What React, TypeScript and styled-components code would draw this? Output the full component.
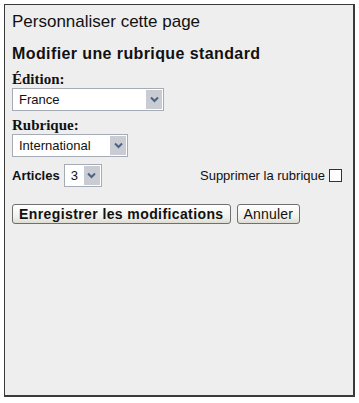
import React from "react";
import styled, { createGlobalStyle } from "styled-components";

const GlobalStyle = createGlobalStyle`
  html, body {
    margin: 0;
    padding: 0;
    background: #ffffff;
  }
  body {
    font-family: "Liberation Sans", Arial, sans-serif;
  }
`;

const Chevron = () => (
  <svg width="9" height="7" viewBox="0 0 9 7">
    <path d="M1 1.5 L4.5 5 L8 1.5" fill="none" stroke="#4d6185" strokeWidth="2" />
  </svg>
);

interface FakeSelectProps {
  value: string;
  width: number;
}

const FakeSelect: React.FC<FakeSelectProps> = ({ value, width }) => (
  <SelectBox $width={width}>
    <SelectValue>{value}</SelectValue>
    <ArrowBox>
      <Chevron />
    </ArrowBox>
  </SelectBox>
);

const App: React.FC = () => {
  return (
    <>
      <GlobalStyle />
      <Page>
        <Panel>
          <Title>Personnaliser cette page</Title>
          <SubTitle>Modifier une rubrique standard</SubTitle>

          <Field $gap={8}>
            <SerifLabel>Édition:</SerifLabel>
            <FakeSelect value="France" width={152} />
          </Field>

          <Field $gap={6}>
            <SerifLabel>Rubrique:</SerifLabel>
            <FakeSelect value="International" width={116} />
          </Field>

          <ArticlesRow>
            <InlineGroup>
              <BoldLabel>Articles</BoldLabel>
              <FakeSelect value="3" width={38} />
            </InlineGroup>
            <InlineGroup>
              <PlainText>Supprimer la rubrique</PlainText>
              <CheckBox />
            </InlineGroup>
          </ArticlesRow>

          <Buttons>
            <Button $bold>Enregistrer les modifications</Button>
            <Button>Annuler</Button>
          </Buttons>
        </Panel>
      </Page>
    </>
  );
};

const Page = styled.div`
  padding: 4px 4px 6px 4px;
  width: 359px;
  height: 403px;
  box-sizing: border-box;
`;

const Panel = styled.div`
  width: 351px;
  height: 393px;
  box-sizing: border-box;
  background: #eeeeee;
  border: 1px solid #3a3a3a;
  border-right-width: 2px;
  border-bottom-width: 2px;
  padding: 7px 7px 0 7px;
  display: flex;
  flex-direction: column;
`;

const Title = styled.div`
  font-size: 17px;
  color: #111;
  line-height: 20px;
`;

const SubTitle = styled.div`
  margin-top: 13px;
  font-size: 16px;
  letter-spacing: 0.4px;
  font-weight: bold;
  color: #111;
  line-height: 18px;
`;

const Field = styled.div<{ $gap: number }>`
  margin-top: ${(p) => p.$gap}px;
  display: flex;
  flex-direction: column;
  align-items: flex-start;
`;

const SerifLabel = styled.div`
  font-family: "Liberation Serif", "Times New Roman", serif;
  font-weight: bold;
  font-size: 15px;
  line-height: 17px;
  color: #111;
`;

const SelectBox = styled.div<{ $width: number }>`
  width: ${(p) => p.$width}px;
  height: 23px;
  box-sizing: border-box;
  background: #ffffff;
  border: 1px solid #a5acb5;
  display: flex;
  align-items: center;
  padding: 1px;
`;

const SelectValue = styled.span`
  flex: 1;
  padding-left: 5px;
  font-size: 13px;
  color: #111;
  white-space: nowrap;
`;

const ArrowBox = styled.span`
  width: 16px;
  height: 19px;
  background: #c9cdd3;
  display: flex;
  align-items: center;
  justify-content: center;
`;

const ArticlesRow = styled.div`
  margin-top: 7px;
  display: flex;
  align-items: center;
  justify-content: space-between;
  padding-right: 4px;
`;

const InlineGroup = styled.div`
  display: flex;
  align-items: center;
  gap: 4px;
`;

const BoldLabel = styled.span`
  font-size: 13px;
  font-weight: bold;
  color: #111;
`;

const PlainText = styled.span`
  font-size: 13px;
  color: #111;
`;

const CheckBox = styled.span`
  width: 11px;
  height: 11px;
  border: 1px solid #333;
  background: #ffffff;
`;

const Buttons = styled.div`
  margin-top: 17px;
  display: flex;
  gap: 6px;
`;

const Button = styled.button<{ $bold?: boolean }>`
  font-family: "Liberation Sans", Arial, sans-serif;
  font-size: 14px;
  letter-spacing: ${(p) => (p.$bold ? "0.4px" : "0.2px")};
  font-weight: ${(p) => (p.$bold ? "bold" : "normal")};
  color: #111;
  height: 20px;
  padding: 0 6px;
  background: linear-gradient(#ffffff, #f0f0ea 70%, #dcdcd4);
  border: 1px solid #6f6f6f;
  border-radius: 3px;
  line-height: 16px;
`;

export default App;
